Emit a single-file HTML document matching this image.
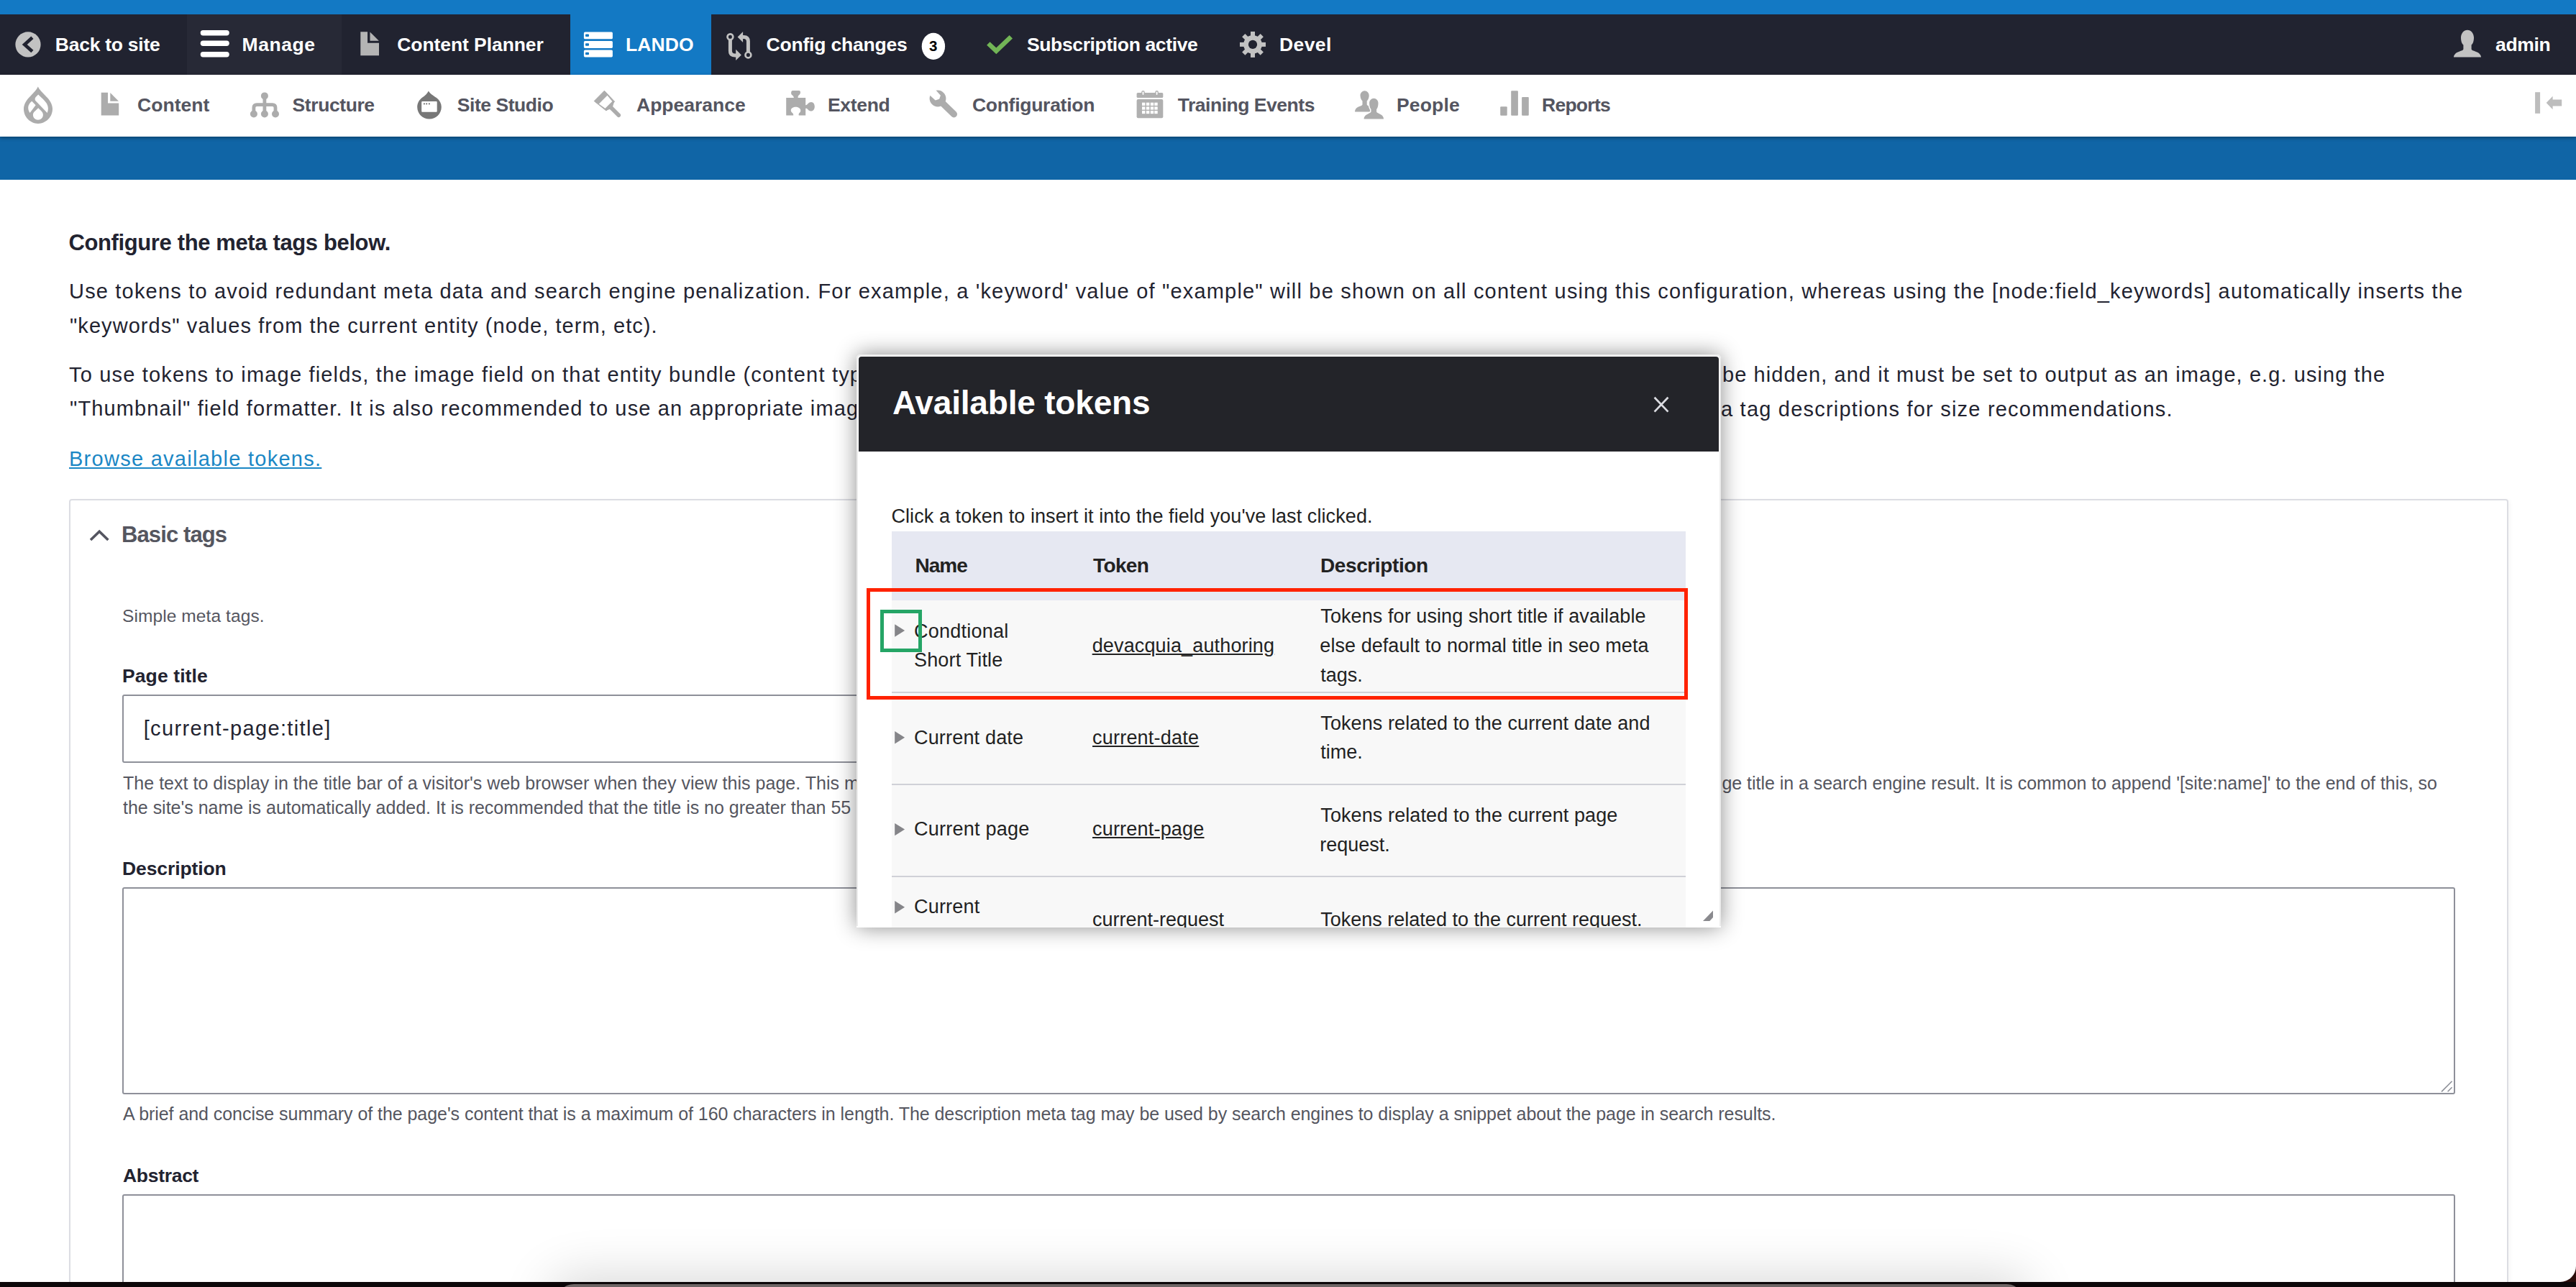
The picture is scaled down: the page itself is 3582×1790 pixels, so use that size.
<!DOCTYPE html>
<html><head><meta charset="utf-8"><title>Available tokens</title>
<style>
html,body{margin:0;padding:0}
body{width:3582px;height:1790px;position:relative;overflow:hidden;background:#fff;font-family:"Liberation Sans",sans-serif}
.t{position:absolute;white-space:nowrap;line-height:normal;font-family:"Liberation Sans",sans-serif}
.a{position:absolute}
svg{position:absolute;overflow:visible}
</style></head>
<body>
<!-- environment stripe -->
<div class="a" style="left:0;top:0;width:3582px;height:20px;background:#1379c4"></div>
<!-- toolbar bar -->
<div class="a" style="left:0;top:20px;width:3582px;height:84px;background:#212330"></div>
<div class="a" style="left:260px;top:20px;width:215px;height:84px;background:#272936"></div>
<div class="a" style="left:793px;top:20px;width:196px;height:84px;background:#1379c4"></div>
<!-- blue band -->
<div class="a" style="left:0;top:190px;width:3582px;height:60px;background:#1065a6"></div>
<!-- tray -->
<div class="a" style="left:0;top:104px;width:3582px;height:86px;background:#fff;box-shadow:0 2px 5px rgba(0,0,0,0.35)"></div>

<!-- details box -->
<div class="a" style="left:96px;top:694px;width:3388px;height:1200px;border:2px solid #dcdde3;border-radius:4px;box-shadow:2px 2px 6px rgba(0,0,0,0.04)"></div>
<!-- page title input -->
<div class="a" style="left:170px;top:966px;width:2200px;height:91px;border:2px solid #8e9099;border-radius:3px"></div>
<!-- description textarea -->
<div class="a" style="left:170px;top:1234px;width:3240px;height:284px;border:2px solid #8e9099;border-radius:3px"></div>
<!-- abstract textarea -->
<div class="a" style="left:170px;top:1661px;width:3240px;height:300px;border:2px solid #8e9099;border-radius:3px"></div>

<div class="t" style="left:76.80px;top:47.00px;font-size:26.5px;font-weight:700;color:#ffffff;letter-spacing:-0.256px">Back to site</div>
<div class="t" style="left:336.60px;top:47.00px;font-size:26.5px;font-weight:700;color:#ffffff;letter-spacing:0.535px">Manage</div>
<div class="t" style="left:552.30px;top:47.00px;font-size:26.5px;font-weight:700;color:#ffffff;letter-spacing:-0.081px">Content Planner</div>
<div class="t" style="left:870.00px;top:47.00px;font-size:26.5px;font-weight:700;color:#ffffff;letter-spacing:0.100px">LANDO</div>
<div class="t" style="left:1065.50px;top:47.00px;font-size:26.5px;font-weight:700;color:#ffffff;letter-spacing:-0.194px">Config changes</div>
<div class="t" style="left:1428.00px;top:47.00px;font-size:26.5px;font-weight:700;color:#ffffff;letter-spacing:-0.373px">Subscription active</div>
<div class="t" style="left:1779.00px;top:47.00px;font-size:26.5px;font-weight:700;color:#ffffff;letter-spacing:0.412px">Devel</div>
<div class="t" style="left:3470.00px;top:47.00px;font-size:26.5px;font-weight:700;color:#ffffff;letter-spacing:-0.313px">admin</div>
<div class="t" style="left:191.00px;top:131.00px;font-size:26.5px;font-weight:700;color:#545560;letter-spacing:0.040px">Content</div>
<div class="t" style="left:406.60px;top:131.00px;font-size:26.5px;font-weight:700;color:#545560;letter-spacing:-0.420px">Structure</div>
<div class="t" style="left:635.80px;top:131.00px;font-size:26.5px;font-weight:700;color:#545560;letter-spacing:-0.450px">Site Studio</div>
<div class="t" style="left:885.00px;top:131.00px;font-size:26.5px;font-weight:700;color:#545560;letter-spacing:0.004px">Appearance</div>
<div class="t" style="left:1151.00px;top:131.00px;font-size:26.5px;font-weight:700;color:#545560;letter-spacing:-0.313px">Extend</div>
<div class="t" style="left:1351.90px;top:131.00px;font-size:26.5px;font-weight:700;color:#545560;letter-spacing:-0.267px">Configuration</div>
<div class="t" style="left:1637.70px;top:131.00px;font-size:26.5px;font-weight:700;color:#545560;letter-spacing:-0.471px">Training Events</div>
<div class="t" style="left:1942.00px;top:131.00px;font-size:26.5px;font-weight:700;color:#545560;letter-spacing:0.170px">People</div>
<div class="t" style="left:2144.00px;top:131.00px;font-size:26.5px;font-weight:700;color:#545560;letter-spacing:-0.731px">Reports</div>
<div class="t" style="left:95.40px;top:319.60px;font-size:31px;font-weight:700;color:#222330;letter-spacing:-0.370px">Configure the meta tags below.</div>
<div class="t" style="left:96.00px;top:389.00px;font-size:29px;font-weight:400;color:#222330;letter-spacing:1.186px">Use tokens to avoid redundant meta data and search engine penalization. For example, a 'keyword' value of "example" will be shown on all content using this configuration, whereas using the [node:field_keywords] automatically inserts the</div>
<div class="t" style="left:97.00px;top:437.00px;font-size:29px;font-weight:400;color:#222330;letter-spacing:1.063px">"keywords" values from the current entity (node, term, etc).</div>
<div class="t" style="left:96.00px;top:504.50px;font-size:29px;font-weight:400;color:#222330;letter-spacing:1.180px">To use tokens to image fields, the image field on that entity bundle (content type, term, etc) must be set to be displayed on the</div>
<div class="t" style="left:2395.00px;top:504.70px;font-size:29px;font-weight:400;color:#222330;letter-spacing:1.083px">be hidden, and it must be set to output as an image, e.g. using the</div>
<div class="t" style="left:97.00px;top:552.30px;font-size:29px;font-weight:400;color:#222330;letter-spacing:1.135px">"Thumbnail" field formatter. It is also recommended to use an appropriate image style, see the individual meta</div>
<div class="t" style="left:2393.00px;top:552.60px;font-size:29px;font-weight:400;color:#222330;letter-spacing:1.214px">a tag descriptions for size recommendations.</div>
<div class="t" style="left:96.00px;top:621.60px;font-size:29px;font-weight:400;color:#1b87c5;letter-spacing:1.273px;text-decoration:underline">Browse available tokens.</div>
<div class="t" style="left:169.00px;top:725.80px;font-size:31px;font-weight:700;color:#55565f;letter-spacing:-0.893px">Basic tags</div>
<div class="t" style="left:170.00px;top:842.50px;font-size:24.5px;font-weight:400;color:#55565f;letter-spacing:0.095px">Simple meta tags.</div>
<div class="t" style="left:170.00px;top:925.00px;font-size:26.5px;font-weight:700;color:#222330;letter-spacing:0.103px">Page title</div>
<div class="t" style="left:199.70px;top:997.30px;font-size:29px;font-weight:400;color:#222330;letter-spacing:1.365px">[current-page:title]</div>
<div class="t" style="left:171.00px;top:1074.80px;font-size:25px;font-weight:400;color:#55565f;letter-spacing:0.026px">The text to display in the title bar of a visitor's web browser when they view this page. This may also be used as the</div>
<div class="t" style="left:2394.40px;top:1075.00px;font-size:25px;font-weight:400;color:#55565f;letter-spacing:-0.033px">ge title in a search engine result. It is common to append '[site:name]' to the end of this, so</div>
<div class="t" style="left:171.00px;top:1108.80px;font-size:25px;font-weight:400;color:#55565f;letter-spacing:-0.016px">the site's name is automatically added. It is recommended that the title is no greater than 55</div>
<div class="t" style="left:170.00px;top:1193.30px;font-size:26.5px;font-weight:700;color:#222330;letter-spacing:-0.099px">Description</div>
<div class="t" style="left:171.00px;top:1534.80px;font-size:25px;font-weight:400;color:#55565f;letter-spacing:-0.055px">A brief and concise summary of the page's content that is a maximum of 160 characters in length. The description meta tag may be used by search engines to display a snippet about the page in search results.</div>
<div class="t" style="left:171.00px;top:1619.50px;font-size:26.5px;font-weight:700;color:#222330;letter-spacing:-0.297px">Abstract</div>

<svg width="3582" height="1790" viewBox="0 0 3582 1790" style="position:absolute;left:0;top:0"><circle cx="39" cy="61.9" r="17.6" fill="#c2c2c2"/><polyline points="44.9,52.2 34.2,61.9 44.9,71.6" fill="none" stroke="#212330" stroke-width="4.7"/><rect x="278.7" y="42" width="40.1" height="7.4" rx="3.7" fill="#fff"/><rect x="278.7" y="56.5" width="40.1" height="7.4" rx="3.7" fill="#fff"/><rect x="278.7" y="72" width="40.1" height="7.4" rx="3.7" fill="#fff"/><g transform="translate(501.3,44.3) scale(1.05,1.04)" fill="#b4b4b4"><path d="M0,0 H9.3 V14.9 H24.5 V31.8 H0 Z"/><path d="M12.6,0.2 L24.3,12 H12.6 Z"/></g><rect x="811.9" y="44.4" width="40" height="9.9" rx="1.6" fill="#fff"/><rect x="814" y="47.6" width="5" height="3.5" rx="1" fill="#1379c4"/><rect x="811.9" y="57" width="40" height="9.9" rx="1.6" fill="#fff"/><rect x="814" y="60.2" width="5" height="3.5" rx="1" fill="#1379c4"/><rect x="811.9" y="69.5" width="40" height="9.9" rx="1.6" fill="#fff"/><rect x="814" y="72.7" width="5" height="3.5" rx="1" fill="#1379c4"/><g fill="none" stroke="#c2c2c2"><circle cx="1015.4" cy="51.3" r="3.9" stroke-width="2.7"/><circle cx="1040.4" cy="76.4" r="3.9" stroke-width="2.7"/><path d="M1015.4,55.2 V70.5 Q1015.4,76.9 1021.8,76.9 H1024" stroke-width="5"/><path d="M1040.4,72.5 V57.5 Q1040.4,51.4 1034.3,51.4 H1032" stroke-width="5"/></g><path d="M1023.2,68.7 V84 L1030.9,76.4 Z M1033.1,44 V59 L1025.6,51.4 Z" fill="#c2c2c2"/><ellipse cx="1297.9" cy="64.4" rx="16.2" ry="18.6" fill="#fff"/><text x="1297.6" y="71.2" text-anchor="middle" font-family="Liberation Sans" font-weight="700" font-size="20.5" fill="#000">3</text><polyline points="1374.3,60.5 1385.3,70.8 1405.8,51.2" fill="none" stroke="#72b556" stroke-width="6.4"/><g transform="translate(1742,61.9)" fill="#c2c2c2"><rect x="-3" y="-18" width="6" height="36" transform="rotate(0)"/><rect x="-3" y="-18" width="6" height="36" transform="rotate(45)"/><rect x="-3" y="-18" width="6" height="36" transform="rotate(90)"/><rect x="-3" y="-18" width="6" height="36" transform="rotate(135)"/><circle r="12.8"/><circle r="6.1" fill="#212330"/></g><path d="M3431.00,41.80 C3436.04,41.80 3440.00,46.52 3440.00,52.30 C3440.00,56.89 3438.85,60.97 3436.60,62.50 L3436.60,68.60 C3437.20,70.10 3439.10,70.40 3442.40,71.76 C3448.10,73.52 3450.00,77.10 3450.00,79.60 L3412.00,79.60 C3412.00,77.10 3413.90,73.52 3419.60,71.76 C3422.90,70.40 3424.80,70.10 3425.40,68.60 L3425.40,62.50 C3423.15,60.97 3422.00,56.89 3422.00,52.30 C3422.00,46.52 3425.96,41.80 3431.00,41.80 Z" fill="#c2c2c2"/><g transform="translate(33,120.6)"><path fill="#acacac" d="M19.8,0 C21.5,4 25.5,8 30.5,12.8 C36,18 40,24 40,31 C40,42.2 31,51.3 20,51.3 C9,51.3 0,42.2 0,31 C0,24 4,18 9.5,12.8 C14.5,8 18.2,4 19.8,0 Z"/><path fill="#fff" d="M20.2,10.9 C24.5,15 29.5,19.5 32,23.5 C34.3,27.5 34.5,32.5 32.7,36.5 L16.8,20 C15.3,18.5 15.3,16.3 16.5,14.6 Z"/><path fill="#fff" d="M11.3,20.2 L16.6,25.6 L8.6,36.5 C6,33 5.8,29.5 6.6,26.5 C7.5,24 9.2,21.8 11.3,20.2 Z"/><path fill="#fff" d="M20.2,29.6 L24.8,34.2 C26.3,35.8 26.9,37.3 26.9,39.2 C26.9,43 23.8,46.2 19.9,46.2 C16,46.2 12.9,43 12.9,39.2 C12.9,37.3 13.6,35.7 15.2,34.3 Z"/></g><g transform="translate(140.7,128.7)" fill="#acacac"><path d="M0,0 H9.3 V14.9 H24.5 V31.8 H0 Z"/><path d="M12.6,0.2 L24.3,12 H12.6 Z"/></g><g transform="translate(343,120)"><g fill="#acacac"><circle cx="24.9" cy="13.4" r="5"/><circle cx="9.9" cy="38.5" r="5"/><circle cx="24.9" cy="38.5" r="5"/><circle cx="40" cy="38.5" r="5"/></g><g fill="none" stroke="#acacac" stroke-width="4.8"><path d="M24.9,13.4 V38.5"/><path d="M9.9,38.5 V29.8 Q9.9,25.6 14.1,25.6 H35.8 Q40,25.6 40,29.8 V38.5"/></g></g><g transform="translate(572,120)"><path fill="#777" d="M23.9,6.4 C25.5,10 30.5,12.8 35,16 C39.5,19.5 41.8,24 41.8,28.8 C41.8,38.1 34.3,45.6 25,45.6 C15.7,45.6 8.2,38.1 8.2,28.8 C8.2,23.5 10.8,19 15,15.8 C19,12.8 22.3,10 23.9,6.4 Z"/><rect x="14.2" y="21" width="21.5" height="14.7" rx="1" fill="#fff"/><g fill="#777"><circle cx="17.9" cy="24.4" r="1.1"/><circle cx="21.2" cy="24.4" r="1.1"/><circle cx="24.9" cy="24.4" r="1.1"/></g></g><g transform="translate(820,120)" fill="#acacac"><path d="M20.4,6.2 L34.6,21.3 L23,34 L6.2,20.6 Z" stroke="#acacac" stroke-width="1" stroke-linejoin="round"/><path d="M24.5,12.8 L31.3,21 L21.5,30.7 L12.8,24.5 Z" fill="#fff"/><path d="M34,21.5 L32,28.5 L28.5,31.5 L22.8,34 Z"/><line x1="28.5" y1="28.5" x2="40.3" y2="40.3" stroke="#acacac" stroke-width="5.6" stroke-linecap="round"/></g><g transform="translate(1088,120)"><path fill="#acacac" d="M5.2,16.1 H15.8 C15.9,14.6 14.8,13.4 13.5,12.3 C12.2,11.2 11.9,9.6 12.2,8.2 C12.5,6.8 13.2,6 14.2,6 H23.2 C24.4,6 25,7 25,8.4 C25,9.9 24.3,11.2 23,12.2 C21.7,13.3 21.4,14.6 21.7,16.1 H32.2 V26.2 C33.6,26.4 34.6,25.3 35.6,24.1 C36.8,22.8 38.4,22.1 40,22.1 C43,22.1 44.8,25 44.8,28.3 C44.8,31.8 42.8,34.6 40,34.6 C38.3,34.6 36.8,33.7 35.6,32.4 C34.6,31.3 33.6,30.7 32.2,30.9 V40.6 H22.8 C22.3,39 22.7,37.8 23.9,36.8 C25.1,35.8 25.5,34.3 25.2,33 C24.7,30.3 22,28.7 18.5,28.7 C15,28.7 12.2,30.4 11.8,33 C11.6,34.4 12.3,35.8 13.5,36.8 C14.8,37.8 15.4,39 15.2,40.6 H5.2 Z"/></g><g><circle cx="1304" cy="137" r="11.4" fill="#acacac"/><line x1="1305" y1="138" x2="1326.4" y2="158.8" stroke="#acacac" stroke-width="9.2" stroke-linecap="round"/><path d="M1296,119.6 L1307.9,132.7 L1306.1,137.7 L1300.7,139.5 L1288,128 Z" fill="#fff"/></g><g transform="translate(1575,120)"><g fill="#b0b0b0"><rect x="5.6" y="9.1" width="36.7" height="7" rx="1.5"/><rect x="5.6" y="18" width="36.7" height="26.3" rx="2"/><rect x="12.2" y="6" width="4.6" height="7.5" rx="2.3"/><rect x="31.3" y="6" width="4.6" height="7.5" rx="2.3"/></g><g fill="#fff"><rect x="13.6" y="7.4" width="1.8" height="4.6" rx="0.9"/><rect x="32.7" y="7.4" width="1.8" height="4.6" rx="0.9"/><rect x="13" y="22.7" width="4.4" height="4.2"/><rect x="13" y="28.4" width="4.4" height="4.2"/><rect x="13" y="34" width="4.4" height="4.2"/><rect x="18.9" y="22.7" width="4.4" height="4.2"/><rect x="18.9" y="28.4" width="4.4" height="4.2"/><rect x="18.9" y="34" width="4.4" height="4.2"/><rect x="24.8" y="22.7" width="4.4" height="4.2"/><rect x="24.8" y="28.4" width="4.4" height="4.2"/><rect x="24.8" y="34" width="4.4" height="4.2"/><rect x="30.3" y="22.7" width="4.4" height="4.2"/><rect x="30.3" y="28.4" width="4.4" height="4.2"/><rect x="30.3" y="34" width="4.4" height="4.2"/></g></g><g transform="translate(1880,120)"><path d="M17.60,6.20 C21.02,6.20 23.70,9.17 23.70,12.80 C23.70,16.31 22.23,19.43 20.70,20.60 L20.70,25.40 C21.30,26.90 23.20,27.20 25.70,28.36 C29.75,29.94 31.10,32.90 31.10,35.40 L4.10,35.40 C4.10,32.90 5.45,29.94 9.50,28.36 C12.00,27.20 13.90,26.90 14.50,25.40 L14.50,20.60 C12.98,19.43 11.50,16.31 11.50,12.80 C11.50,9.17 14.18,6.20 17.60,6.20 Z" fill="#acacac"/><path d="M30.30,16.70 C33.77,16.70 36.50,19.67 36.50,23.30 C36.50,27.21 35.65,30.70 34.10,32.00 L34.10,35.60 C34.70,37.10 36.60,37.40 38.52,38.56 C42.63,40.14 44.00,43.10 44.00,45.60 L16.60,45.60 C16.60,43.10 17.97,40.14 22.08,38.56 C24.00,37.40 25.90,37.10 26.50,35.60 L26.50,32.00 C24.95,30.70 24.10,27.21 24.10,23.30 C24.10,19.67 26.83,16.70 30.30,16.70 Z" fill="none" stroke="#fff" stroke-width="3"/><path d="M30.30,16.70 C33.77,16.70 36.50,19.67 36.50,23.30 C36.50,27.21 35.65,30.70 34.10,32.00 L34.10,35.60 C34.70,37.10 36.60,37.40 38.52,38.56 C42.63,40.14 44.00,43.10 44.00,45.60 L16.60,45.60 C16.60,43.10 17.97,40.14 22.08,38.56 C24.00,37.40 25.90,37.10 26.50,35.60 L26.50,32.00 C24.95,30.70 24.10,27.21 24.10,23.30 C24.10,19.67 26.83,16.70 30.30,16.70 Z" fill="#acacac"/></g><g transform="translate(2080,120)" fill="#acacac"><rect x="6.2" y="28.2" width="9.5" height="12.6" rx="1"/><rect x="21.2" y="6.2" width="9.7" height="34.6" rx="1"/><rect x="36.1" y="15" width="9.7" height="25.8" rx="1"/></g><g fill="#bdbdbd"><rect x="3525.1" y="128.2" width="7" height="29.6"/><path d="M3540.7,143.1 L3549.6,133.8 V138.4 H3562.2 V147.6 H3549.6 V152.3 Z"/></g><polyline points="126,751 138.2,739.2 150.4,751" fill="none" stroke="#545560" stroke-width="3.6"/><g stroke="#8e9099" stroke-width="1.6"><line x1="3395" y1="1518.4" x2="3409.6" y2="1503.8"/><line x1="3403.6" y1="1518.2" x2="3409.6" y2="1512.3"/></g></svg>

<!-- bottom shadow + black strip -->
<div class="a" style="left:0;top:1783px;width:3582px;height:7px;background:#0d0709"></div>
<div class="a" style="left:3500px;top:1700px;width:82px;height:83px;overflow:hidden"><div class="a" style="left:-40px;top:-40px;width:122px;height:123px;border-bottom-right-radius:22px;box-shadow:0 0 0 40px #2a0c0a"></div></div>
<div class="a" style="left:774px;top:1786px;width:2040px;height:60px;border-radius:24px;background:#6e6565;box-shadow:0 0 70px 10px rgba(0,0,0,0.16)"></div>
<div class="a" style="left:0;top:1783px;width:3582px;height:2px;background:#0d0709"></div>

<!-- dialog -->
<div class="a" style="left:1191px;top:493px;width:1202px;height:797px;background:#fff;border-radius:5px 5px 0 0;box-shadow:0 0 30px rgba(0,0,0,0.45);overflow:hidden">
  <div class="a" style="left:0;top:0;width:1198px;height:793px;border:2px solid #ececec;border-bottom:0;border-radius:5px 5px 0 0"></div>
  <div class="a" style="left:3px;top:3px;width:1196px;height:132px;background:#232429;border-radius:4px 4px 0 0"></div>
  <!-- table header -->
  <div class="a" style="left:49px;top:246px;width:1104px;height:96px;background:#e6e8f2"></div>
  <!-- rows -->
  <div class="a" style="left:49px;top:342px;width:1104px;height:127px;background:#f8f8f8;border-bottom:2px solid #d0d1d7"></div>
  <div class="a" style="left:49px;top:471px;width:1104px;height:126px;background:#f8f8f8;border-bottom:2px solid #d0d1d7"></div>
  <div class="a" style="left:49px;top:599px;width:1104px;height:126px;background:#f8f8f8;border-bottom:2px solid #d0d1d7"></div>
  <div class="a" style="left:49px;top:727px;width:1104px;height:126px;background:#f8f8f8"></div>
<div class="t" style="left:50.00px;top:40.00px;font-size:46px;font-weight:700;color:#ffffff;letter-spacing:-0.183px">Available tokens</div>
<div class="t" style="left:48.40px;top:210.00px;font-size:27px;font-weight:400;color:#222222;letter-spacing:0.084px">Click a token to insert it into the field you've last clicked.</div>
<div class="t" style="left:81.50px;top:278.20px;font-size:28px;font-weight:700;color:#222222;letter-spacing:-0.996px">Name</div>
<div class="t" style="left:329.00px;top:278.20px;font-size:28px;font-weight:700;color:#222222;letter-spacing:-0.618px">Token</div>
<div class="t" style="left:645.00px;top:278.20px;font-size:28px;font-weight:700;color:#222222;letter-spacing:-0.392px">Description</div>
<div class="t" style="left:80.00px;top:370.00px;font-size:27px;font-weight:400;color:#222222;letter-spacing:0.245px">Condtional</div>
<div class="t" style="left:80.00px;top:410.00px;font-size:27px;font-weight:400;color:#222222;letter-spacing:0.168px">Short Title</div>
<div class="t" style="left:327.70px;top:389.80px;font-size:27px;font-weight:400;color:#222222;letter-spacing:0.145px;text-decoration:underline">devacquia_authoring</div>
<div class="t" style="left:645.30px;top:349.20px;font-size:27px;font-weight:400;color:#222222;letter-spacing:0.087px">Tokens for using short title if available</div>
<div class="t" style="left:644.30px;top:389.70px;font-size:27px;font-weight:400;color:#222222;letter-spacing:0.063px">else default to normal title in seo meta</div>
<div class="t" style="left:645.30px;top:430.80px;font-size:27px;font-weight:400;color:#222222;letter-spacing:0.000px">tags.</div>
<div class="t" style="left:80.00px;top:518.00px;font-size:27px;font-weight:400;color:#222222;letter-spacing:0.176px">Current date</div>
<div class="t" style="left:328.00px;top:518.00px;font-size:27px;font-weight:400;color:#222222;letter-spacing:0.222px;text-decoration:underline">current-date</div>
<div class="t" style="left:645.30px;top:497.60px;font-size:27px;font-weight:400;color:#222222;letter-spacing:0.090px">Tokens related to the current date and</div>
<div class="t" style="left:645.30px;top:538.40px;font-size:27px;font-weight:400;color:#222222;letter-spacing:0.000px">time.</div>
<div class="t" style="left:80.00px;top:645.00px;font-size:27px;font-weight:400;color:#222222;letter-spacing:0.238px">Current page</div>
<div class="t" style="left:328.00px;top:645.00px;font-size:27px;font-weight:400;color:#222222;letter-spacing:0.203px;text-decoration:underline">current-page</div>
<div class="t" style="left:645.30px;top:626.00px;font-size:27px;font-weight:400;color:#222222;letter-spacing:0.099px">Tokens related to the current page</div>
<div class="t" style="left:644.30px;top:667.00px;font-size:27px;font-weight:400;color:#222222;letter-spacing:0.000px">request.</div>
<div class="t" style="left:80.00px;top:753.00px;font-size:27px;font-weight:400;color:#222222;letter-spacing:0.195px">Current</div>
<div class="t" style="left:328.00px;top:771.00px;font-size:27px;font-weight:400;color:#222222;letter-spacing:0.000px;text-decoration:underline">current-request</div>
<div class="t" style="left:645.30px;top:771.00px;font-size:27px;font-weight:400;color:#222222;letter-spacing:0.000px">Tokens related to the current request.</div>
</div>
<svg width="3582" height="1790" viewBox="0 0 3582 1790" style="position:absolute;left:0;top:0"><g stroke="#dcdde2" stroke-width="2.7"><line x1="2300.6" y1="552.7" x2="2319.5" y2="572.6"/><line x1="2300.6" y1="572.6" x2="2319.5" y2="552.7"/></g><path d="M1244.2,868.3 V885.7 L1258.1,877 Z" fill="#858589"/><path d="M1244.2,1017.0999999999999 V1034.5 L1258.1,1025.8 Z" fill="#858589"/><path d="M1244.2,1144.8999999999999 V1162.3 L1258.1,1153.6 Z" fill="#858589"/><path d="M1244.2,1253.0 V1270.4 L1258.1,1261.7 Z" fill="#858589"/><path d="M2368,1281 L2382,1266.5 V1276 L2377.3,1281 Z" fill="#6d6d72" opacity="0.8"/></svg>
<!-- annotation boxes -->
<div class="a" style="left:1205px;top:818px;width:1132px;height:145px;border:5px solid #ff2200"></div>
<div class="a" style="left:1224px;top:848px;width:48px;height:49px;border:5px solid #25a566"></div>
</body></html>
